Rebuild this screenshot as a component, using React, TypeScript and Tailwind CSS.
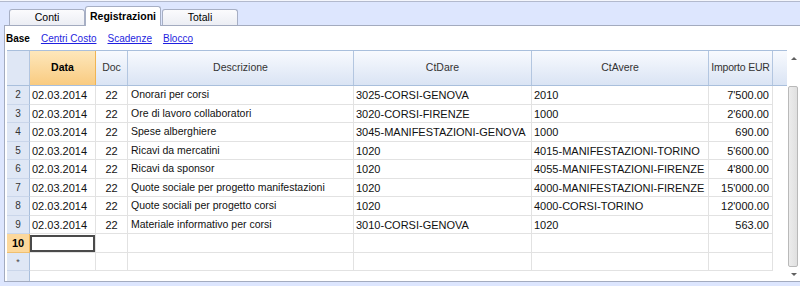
import React from 'react'

type Row = {
  n: string
  data: string
  doc: string
  desc: string
  dare: string
  avere: string
  imp: string
}

const rows: Row[] = [
  { n: '2', data: '02.03.2014', doc: '22', desc: 'Onorari per corsi', dare: '3025-CORSI-GENOVA', avere: '2010', imp: "7'500.00" },
  { n: '3', data: '02.03.2014', doc: '22', desc: 'Ore di lavoro collaboratori', dare: '3020-CORSI-FIRENZE', avere: '1000', imp: "2'600.00" },
  { n: '4', data: '02.03.2014', doc: '22', desc: 'Spese alberghiere', dare: '3045-MANIFESTAZIONI-GENOVA', avere: '1000', imp: '690.00' },
  { n: '5', data: '02.03.2014', doc: '22', desc: 'Ricavi da mercatini', dare: '1020', avere: '4015-MANIFESTAZIONI-TORINO', imp: "5'600.00" },
  { n: '6', data: '02.03.2014', doc: '22', desc: 'Ricavi da sponsor', dare: '1020', avere: '4055-MANIFESTAZIONI-FIRENZE', imp: "4'800.00" },
  { n: '7', data: '02.03.2014', doc: '22', desc: 'Quote sociale per progetto manifestazioni', dare: '1020', avere: '4000-MANIFESTAZIONI-FIRENZE', imp: "15'000.00" },
  { n: '8', data: '02.03.2014', doc: '22', desc: 'Quote sociali per progetto corsi', dare: '1020', avere: '4000-CORSI-TORINO', imp: "12'000.00" },
  { n: '9', data: '02.03.2014', doc: '22', desc: 'Materiale informativo per corsi', dare: '3010-CORSI-GENOVA', avere: '1020', imp: '563.00' },
]

const cell = 'h-full border-r border-b border-[#e2e2e2] overflow-hidden whitespace-nowrap flex items-center pt-px'
const hcell = 'h-full border-r border-[#b3c6e0] flex items-center justify-center whitespace-nowrap overflow-hidden text-[#333]'

const DataRow = ({ r }: { r: Row }) => (
  <div className="flex h-[18.5px] text-[11px] text-[#111]">
    <div className="w-[23px] h-full bg-[#dfe7f5] border-r border-[#a9bfdc] border-b border-b-[#cad6ea] flex items-center justify-center text-[10px] text-[#333]">
      {r.n}
    </div>
    <div className={`${cell} w-[66px] pl-[2px]`}>{r.data}</div>
    <div className={`${cell} w-[32px] justify-center`}>{r.doc}</div>
    <div className={`${cell} w-[226px] pl-[3px] text-[10.5px]`}>{r.desc}</div>
    <div className={`${cell} w-[178px] pl-[2px]`}>{r.dare}</div>
    <div className={`${cell} w-[177px] pl-[2px]`}>{r.avere}</div>
    <div className={`${cell} w-[64px] justify-end pr-[3px]`}>{r.imp}</div>
    <div className="w-[14px]" />
  </div>
)

const EmptyRow = ({ n, active }: { n: string; active?: boolean }) => (
  <div className="flex h-[18.5px] text-[11px]">
    {active ? (
      <div className="w-[23px] h-full bg-[#fcd89c] border-r border-[#f0b453] border-b border-b-[#f0c070] flex items-center justify-center text-[11px] font-bold">
        {n}
      </div>
    ) : (
      <div className="w-[23px] h-full bg-[#dfe7f5] border-r border-[#a9bfdc] border-b border-b-[#cad6ea] flex items-start justify-center text-[9px] text-[#444] pt-[3px]">
        {n}
      </div>
    )}
    <div className={`${cell} w-[66px] p-0`}>
      {active && <div className="w-full h-full border-2 border-[#4a4a4a]" />}
    </div>
    <div className={`${cell} w-[32px]`} />
    <div className={`${cell} w-[226px]`} />
    <div className={`${cell} w-[178px]`} />
    <div className={`${cell} w-[177px]`} />
    <div className={`${cell} w-[64px]`} />
    <div className="w-[14px]" />
  </div>
)

export default function App() {
  return (
    <div className="w-[800px] h-[286px] overflow-hidden bg-[#dde6fe] font-['Liberation_Sans',Arial,sans-serif] text-black">
      <div className="h-px bg-[#f4f6fc]" />
      {/* tab strip */}
      <div className="h-[24px] border-t border-[#b2b9cd] flex items-end text-[10.5px]">
        <div className="ml-[9px] w-[76px] h-[16px] rounded-t-[3px] border border-b-0 border-[#a7afc4] bg-gradient-to-b from-[#fbfbfd] to-[#eceef4] flex items-center justify-center">
          Conti
        </div>
        <div className="w-[76px] h-[20px] -mb-px relative z-10 rounded-t-[3px] border border-b-0 border-[#a7afc4] bg-white flex items-center justify-center font-bold">
          Registrazioni
        </div>
        <div className="ml-[1px] w-[76px] h-[16px] rounded-t-[3px] border border-b-0 border-[#a7afc4] bg-gradient-to-b from-[#fbfbfd] to-[#eceef4] flex items-center justify-center">
          Totali
        </div>
      </div>

      {/* panel */}
      <div className="ml-[4px] h-[257px] border-l border-t border-b border-[#a3abbf] bg-white flex flex-col">
        <div className="h-[24px] flex items-center pl-[1px] gap-[11px] text-[10px]">
          <span className="font-bold">Base</span>
          <span className="text-[#1f1fe0] underline">Centri Costo</span>
          <span className="text-[#1f1fe0] underline">Scadenze</span>
          <span className="text-[#1f1fe0] underline">Blocco</span>
        </div>

        <div className="flex-1 ml-[2px] flex">
          {/* table */}
          <div className="w-[780px] flex flex-col">
            <div className="flex h-[36px] border-t border-b border-[#a9bfdc] bg-gradient-to-b from-[#f8fafe] to-[#dae4f4] text-[10.5px]">
              <div className={`${hcell} w-[23px] bg-[#dfe7f5] border-[#a9bfdc]`} />
              <div className="w-[66px] h-full border-r border-[#f0b453] bg-gradient-to-b from-[#fde7bb] to-[#f9cb80] flex items-center justify-center font-bold text-black">
                Data
              </div>
              <div className={`${hcell} w-[32px]`}>Doc</div>
              <div className={`${hcell} w-[226px]`}>Descrizione</div>
              <div className={`${hcell} w-[178px]`}>CtDare</div>
              <div className={`${hcell} w-[177px]`}>CtAvere</div>
              <div className={`${hcell} w-[64px] tracking-[-0.2px]`}>Importo EUR</div>
              <div className="w-[14px]" />
            </div>
            {rows.map((r) => (
              <DataRow key={r.n} r={r} />
            ))}
            <EmptyRow n="10" active />
            <EmptyRow n="*" />
            <div className="flex-1 flex">
              <div className="w-[23px] bg-[#dfe7f5] border-r border-[#a9bfdc]" />
            </div>
          </div>

          {/* scrollbar */}
          <div className="w-[13px] flex flex-col">
            <div className="h-[17px] flex items-center justify-center">
              <div className="w-0 h-0 border-l-[3px] border-r-[3px] border-b-[3px] border-l-transparent border-r-transparent border-b-[#606060]" />
            </div>
            <div className="h-[19px]" />
            <div className="h-[181px] ml-px mr-[2px] rounded-[2px] border border-[#b9b9b9] bg-gradient-to-r from-[#ececec] to-[#e0e0e0]" />
            <div className="flex-1 flex items-center justify-center">
              <div className="w-0 h-0 border-l-[3px] border-r-[3px] border-t-[3px] border-l-transparent border-r-transparent border-t-[#606060]" />
            </div>
          </div>
        </div>
      </div>
    </div>
  )
}
